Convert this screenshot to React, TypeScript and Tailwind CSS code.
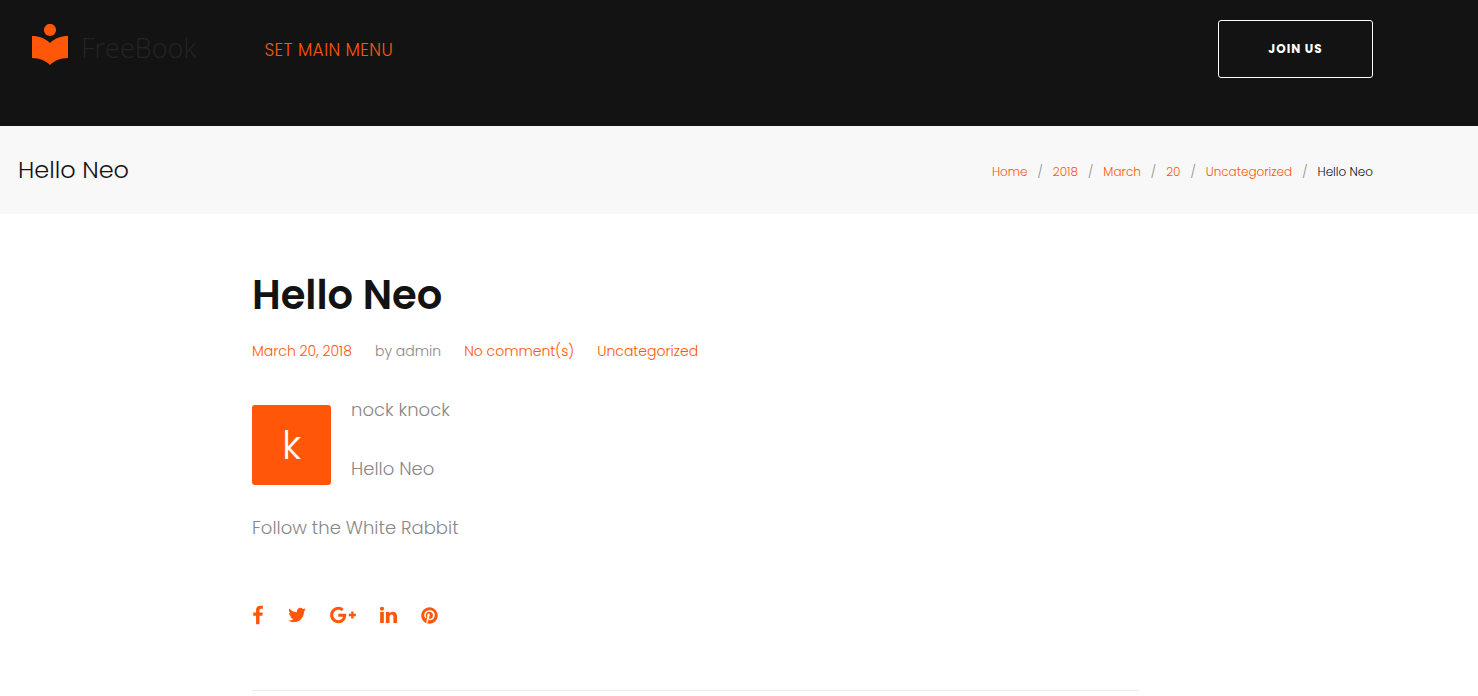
import { FaPinterest } from 'react-icons/fa';

const breadcrumbs = ['Home', '2018', 'March', '20', 'Uncategorized'];

function Logo() {
  return (
    <a href="#" className="flex items-start gap-[13px]">
      <svg viewBox="0 0 36 41" className="h-[41px] w-9 fill-[#ff5608]" aria-hidden="true">
        <circle cx="18" cy="6" r="6.1" />
        <path d="M0 12 C7.5 12 13 14.2 18 19 C23 14.2 28.500 12 36 12 V34 C28.500 34.200 23 36.200 18 41 C13 36.200 7.500 34.200 0 34 Z" />
      </svg>
      <span className="pt-1 font-['Open_Sans',sans-serif] text-[27px] leading-10 font-light text-[#242424]">FreeBook</span>
    </a>
  );
}

function Header() {
  return (
    <header className="flex items-start bg-[#131313] pt-5 pr-[105px] pb-12 pl-8">
      <div className="pt-1">
        <Logo />
      </div>
      <nav className="ml-[68px] flex-1 pt-4">
        <a href="#" className="text-[17px] leading-7 font-light tracking-wide text-[#ff5608] uppercase">
          Set main menu
        </a>
      </nav>
      <button
        type="button"
        className="h-[58px] w-[155px] rounded-[3px] border border-white text-xs font-bold tracking-[1px] text-white uppercase"
      >
        Join us
      </button>
    </header>
  );
}

function TitleBar() {
  return (
    <div className="flex items-center justify-between bg-[#f8f8f8] py-6 pr-[105px] pl-[18px]">
      <h2 className="text-2xl leading-10 font-light text-[#131313]">Hello Neo</h2>
      <nav aria-label="Breadcrumb" className="pt-1">
        <ol className="flex text-xs leading-5 font-light">
          {breadcrumbs.map((item) => (
            <li key={item}>
              <a href="#" className="text-[#ff5608]">{item}</a>
              <span className="mx-[10px] text-[#888]">/</span>
            </li>
          ))}
          <li className="text-[#131313]">Hello Neo</li>
        </ol>
      </nav>
    </div>
  );
}

function ShareLinks() {
  return (
    <div className="flex h-[26px] items-center gap-6 text-[#ff5608]">
      <a href="#" aria-label="Facebook">
        <svg viewBox="370 -64 1075 1792" className="h-5 w-3 fill-current">
          <path d="M1343 12v264h-157q-86 0-116 36t-30 108v189h293l-39 296h-254v759h-306v-759h-255v-296h255v-218q0-186 104-288.5t277-102.5q147 0 228 12z" />
        </svg>
      </a>
      <a href="#" aria-label="Twitter">
        <svg viewBox="90 0 1613 1792" className="h-5 w-[18px] fill-current">
          <path d="M1684 408q-67 98-162 167 1 14 1 42 0 130-38 259.5t-115.5 248.5-184.5 210.5-258 146-323 54.5q-271 0-496-145 35 4 78 4 225 0 401-138-105-2-188-64.5t-114-159.5q33 5 61 5 43 0 85-11-112-23-185.5-111.5t-73.5-205.5v-4q68 38 146 41-66-44-105-115t-39-154q0-88 44-163 121 149 294.5 238.5t371.5 99.5q-8-38-8-74 0-134 94.5-228.5t228.5-94.5q140 0 236 102 109-21 205-78-37 115-142 178 93-10 186-50z" />
        </svg>
      </a>
      <a href="#" aria-label="Google Plus">
        <svg viewBox="0 0 2304 1792" className="h-5 w-[26px] fill-current">
          <path d="M1437 913q0 208-87 370.5t-248 254-369 91.5q-149 0-285-58t-234-156-156-234-58-285 58-285 156-234 234-156 285-58q286 0 491 192l-199 191q-117-113-292-113-123 0-227.5 62t-165.5 168.5-61 232.5 61 232.5 165.5 168.5 227.5 62q83 0 152.5-23t114.5-57.5 78.5-78.5 49-83 21.5-74h-416v-252h692q12 63 12 122zm867-122v210h-209v209h-210v-209h-209v-210h209v-209h210v209h209z" />
        </svg>
      </a>
      <a href="#" aria-label="LinkedIn">
        <svg viewBox="134 0 1523 1792" className="h-5 w-[17px] overflow-visible fill-current">
          <path d="M477 625v991h-330v-991h330zm21-306q1 73-50.500 122t-135.500 49h-2q-82 0-132-49t-50-122q0-74 51.500-122.500t134.500-48.500 133 48.500 51 122.500zm1166 729v568h-329v-530q0-105-40.500-164.500t-126.500-59.500q-63 0-105.500 34.500t-63.500 85.500q-11 30-11 81v553h-329q2-399 2-647t-1-296l-1-48h329v144h-2q20-32 41-56t56.500-52 87-43.500 114.500-15.500q171 0 275 113.500t104 332.500z" />
        </svg>
      </a>
      <a href="#" aria-label="Pinterest">
        <FaPinterest className="size-[17px]" />
      </a>
    </div>
  );
}

function Post() {
  return (
    <article className="mx-auto max-w-[887px] border-b border-[#ebebeb] pb-[62px]">
      <h1 className="text-[40px] leading-[50px] font-semibold text-[#131313]">Hello Neo</h1>
      <div className="mt-[19px] flex gap-[23px] text-sm leading-6 font-light text-[#888]">
        <a href="#" className="text-[#ff5608]">March 20, 2018</a>
        <span>by admin</span>
        <a href="#" className="text-[#ff5608]">No comment(s)</a>
        <a href="#" className="text-[#ff5608]">Uncategorized</a>
      </div>

      <div className="mt-8 text-lg leading-[29px] font-light text-[#888]">
        <div className="flex gap-5">
          {/* Drop cap */}
          <span className="mt-[10px] flex h-20 w-[79px] items-center justify-center rounded-[3px] bg-[#ff5608] text-[40px] text-white">
            k
          </span>
          <div className="flex flex-col gap-[30px]">
            <p>nock knock</p>
            <p>Hello Neo</p>
          </div>
        </div>
        <p className="mt-7">Follow the White Rabbit</p>
      </div>

      <div className="mt-[60px]">
        <ShareLinks />
      </div>
    </article>
  );
}

export default function App() {
  return (
    <div className="bg-white font-['Poppins','Inter',sans-serif]">
      <Header />
      <TitleBar />
      <main className="pt-14 pr-[105px] pl-[18px]">
        <Post />
      </main>
    </div>
  );
}
